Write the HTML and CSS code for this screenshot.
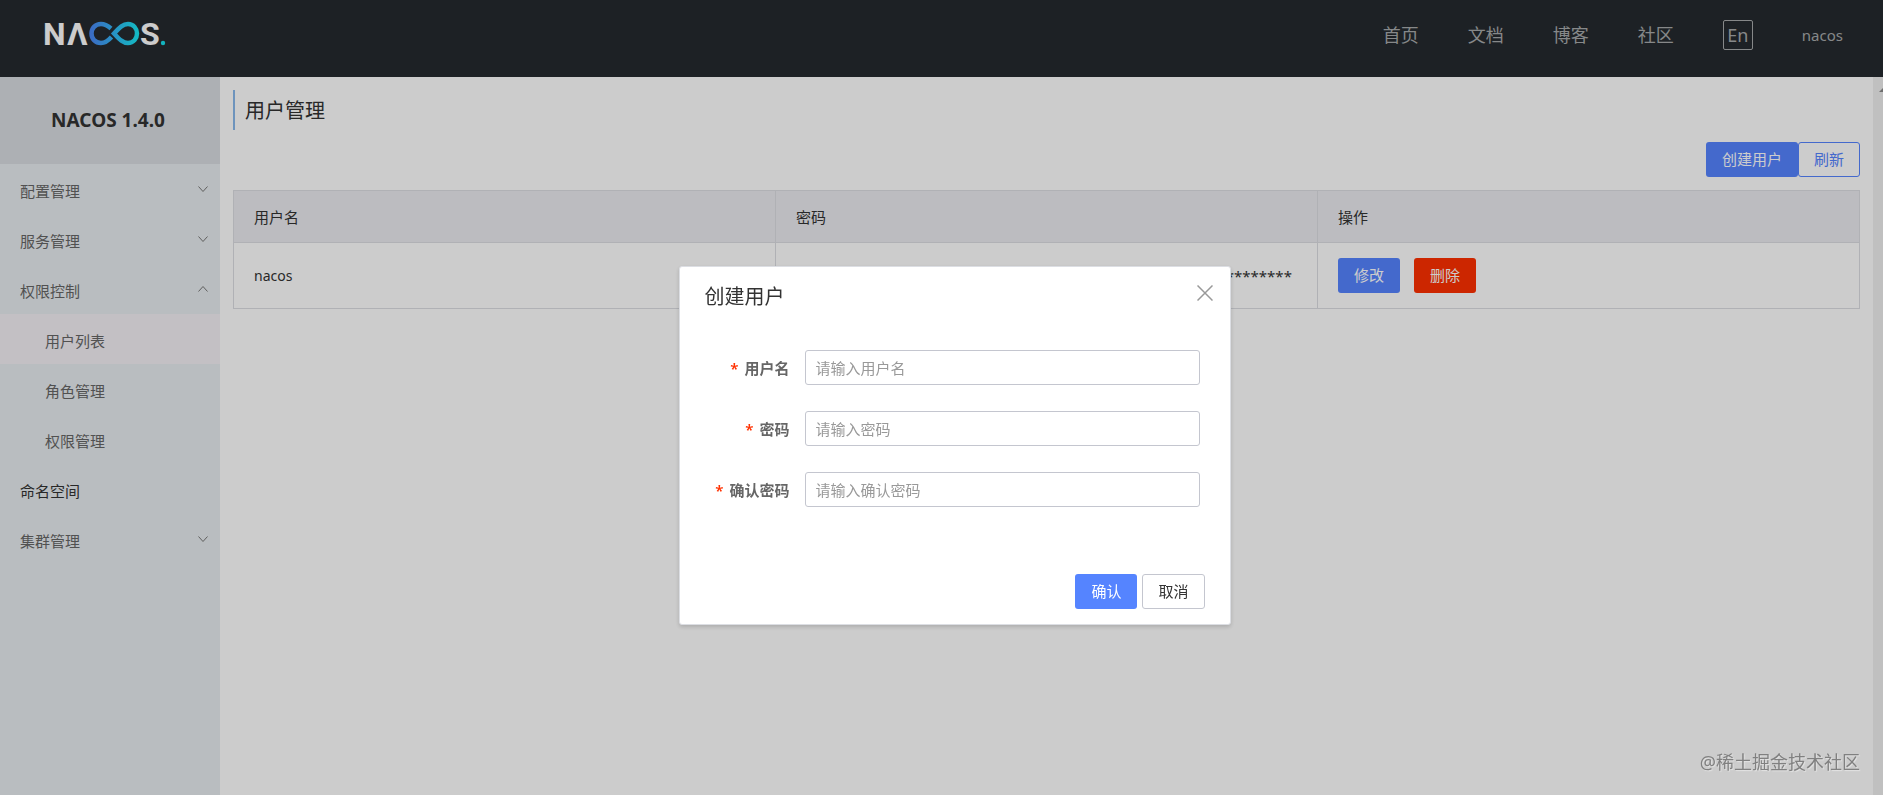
FILE: index.html
```html
<!DOCTYPE html>
<html lang="zh-CN">
<head>
<meta charset="utf-8">
<title>Nacos</title>
<link rel="stylesheet" href="styles.css">
</head>
<body>
<div class="app">
  <header class="header">
    <a class="logo" href="#" aria-label="Nacos">
      <svg width="124" height="40" viewBox="0 -8 124 40">
        <defs>
          <linearGradient id="loop" gradientUnits="userSpaceOnUse" x1="46" y1="0" x2="94" y2="0">
            <stop offset="0" stop-color="#4a88f6"/>
            <stop offset="1" stop-color="#18eaf4"/>
          </linearGradient>
        </defs>
        <g class="logo-text">
          <text x="-2" y="27">N</text>
          <text x="22" y="27">Λ</text>
          <text x="95" y="27">S</text>
        </g>
        <g fill="none" stroke="url(#loop)" stroke-width="4.500">
          <path d="M66 10.500C62.500 7.500 60 6 56 6C50 6 46.500 10.500 46.500 15.500S50 25 56 25C60 25 62.500 23.500 66.500 19"/>
          <path d="M69 15.500C75 9 78 6 83 6C88.500 6 92 10.500 92 15.500S88.500 25 83 25C78 25 75 22 69 15.500Z"/>
        </g>
        <circle cx="118" cy="25" r="2.200" fill="#18e0ee"/>
      </svg>
    </a>
    <nav class="nav">
      <a href="#">首页</a>
      <a href="#">文档</a>
      <a href="#">博客</a>
      <a href="#">社区</a>
      <button class="lang" type="button">En</button>
      <a class="account" href="#">nacos</a>
    </nav>
  </header>
  <div class="body">
    <aside class="sidebar">
      <h1 class="version">NACOS 1.4.0</h1>
      <ul class="menu">
        <li><a href="#">配置管理<svg class="chevron" viewBox="0 0 10 6"><path d="M0.500 0.500L5 5.500L9.500 0.500"/></svg></a></li>
        <li><a href="#">服务管理<svg class="chevron" viewBox="0 0 10 6"><path d="M0.500 0.500L5 5.500L9.500 0.500"/></svg></a></li>
        <li><a href="#">权限控制<svg class="chevron" viewBox="0 0 10 6"><path d="M0.500 5.500L5 0.500L9.500 5.500"/></svg></a></li>
        <li><a class="sub active" href="#">用户列表</a></li>
        <li><a class="sub" href="#">角色管理</a></li>
        <li><a class="sub" href="#">权限管理</a></li>
        <li><a class="leaf" href="#">命名空间</a></li>
        <li><a href="#">集群管理<svg class="chevron" viewBox="0 0 10 6"><path d="M0.500 0.500L5 5.500L9.500 0.500"/></svg></a></li>
      </ul>
    </aside>
    <main class="main">
      <h2 class="page-title">用户管理</h2>
      <div class="toolbar">
        <button class="btn primary" type="button">创建用户</button>
        <button class="btn ghost" type="button">刷新</button>
      </div>
      <table class="table">
        <thead>
          <tr><th>用户名</th><th>密码</th><th>操作</th></tr>
        </thead>
        <tbody>
          <tr>
            <td class="name">nacos</td>
            <td>************************************************************</td>
            <td>
              <div class="actions">
                <button class="btn primary" type="button">修改</button>
                <button class="btn danger" type="button">删除</button>
              </div>
            </td>
          </tr>
        </tbody>
      </table>
    </main>
    <div class="scrollbar"><svg width="10" height="6" viewBox="0 0 10 6"><path d="M0 5L5 0L10 5Z" fill="#8a8a8a"/></svg></div>
  </div>
</div>
<div class="overlay">
  <form class="dialog" role="dialog" aria-labelledby="dialog-title">
    <div class="dialog-head">
      <h2 id="dialog-title">创建用户</h2>
      <button class="close" type="button" aria-label="关闭"><svg width="16" height="16" viewBox="0 0 16 16"><path d="M0.500 0.500L15.500 15.500M15.500 0.500L0.500 15.500"/></svg></button>
    </div>
    <div class="fields">
      <label for="username">用户名</label>
      <input id="username" type="text" placeholder="请输入用户名">
      <label for="password">密码</label>
      <input id="password" type="password" placeholder="请输入密码">
      <label for="confirm">确认密码</label>
      <input id="confirm" type="password" placeholder="请输入确认密码">
    </div>
    <div class="dialog-foot">
      <button class="btn primary" type="button">确认</button>
      <button class="btn normal" type="button">取消</button>
    </div>
  </form>
</div>
<div class="watermark">@稀土掘金技术社区</div>
</body>
</html>
```
FILE: styles.css
```css
* {
  box-sizing: border-box;
}

body {
  margin: 0;
  overflow: hidden;
  font: 15px/20px "Noto Sans", "Noto Sans CJK SC", sans-serif;
  color: #333;
}

h1, h2, ul {
  margin: 0;
  padding: 0;
  font-weight: 400;
}

a {
  color: inherit;
  text-decoration: none;
}

button, input {
  font: inherit;
}

.app {
  display: flex;
  flex-direction: column;
  height: 100vh;
}

/* Top bar */
.header {
  display: flex;
  flex: none;
  justify-content: space-between;
  height: 77px;
  padding: 0 40px 0 45px;
  background: #252a2f;
}

.logo {
  padding-top: 10px;
}

.logo svg {
  display: block;
  overflow: visible;
}

.logo-text {
  font: 700 32px Roboto, sans-serif;
  fill: #fff;
}

.nav {
  display: flex;
  align-items: center;
  gap: 49px;
  height: 70px;
  font-size: 18px;
  color: #a8aaac;
}

.lang {
  width: 30px;
  height: 30px;
  padding: 0;
  border: 1px solid #a8aaac;
  border-radius: 2px;
  background: none;
  color: inherit;
  line-height: 24px;
}

.account {
  font-size: 15px;
}

.body {
  display: flex;
  flex: 1;
  min-height: 0;
}

/* Sidebar */
.sidebar {
  flex: none;
  width: 220px;
  background: #e8edf0;
}

.version {
  height: 87px;
  padding-right: 4px;
  background: #d9dde2;
  font-size: 19px;
  font-weight: 700;
  line-height: 87px;
  text-align: center;
}

.menu {
  list-style: none;
}

.menu a {
  display: flex;
  align-items: center;
  justify-content: space-between;
  height: 50px;
  padding: 4px 12px 0 20px;
  color: #666;
}

.menu .sub {
  padding-left: 45px;
}

.menu .active {
  background: #f4f1f6;
}

.menu .leaf {
  color: #333;
}

.chevron {
  width: 10px;
  height: 6px;
  margin-bottom: 4px;
  overflow: visible;
  fill: none;
  stroke: #777;
}

/* Content */
.main {
  flex: 1;
  padding: 13px;
}

.page-title {
  padding: 2px 0 0 10px;
  border-left: 2px solid #89b8ec;
  font-size: 20px;
  line-height: 38px;
}

.toolbar {
  display: flex;
  justify-content: flex-end;
  padding: 12px 0 13px;
}

.btn {
  height: 35px;
  padding: 0 15px;
  border: 1px solid transparent;
  border-radius: 3px;
  line-height: 33px;
}

.primary {
  background: #5584ff;
  color: #fff;
}

.ghost {
  border-color: #5584ff;
  background: none;
  color: #5584ff;
}

.danger {
  background: #ff3000;
  color: #fff;
}

.normal {
  border-color: #c4c6cf;
  background: #fff;
  color: #333;
}

.table {
  width: 100%;
  border-collapse: collapse;
  table-layout: fixed;
}

.table th, .table td {
  padding: 0 20px;
  border: 1px solid #dcdee3;
  font-weight: 400;
  text-align: left;
}

.table th {
  height: 52px;
  background: #ebecf0;
}

.table td {
  height: 66px;
}

.table .name {
  font-size: 14px;
}

.actions {
  display: flex;
  gap: 14px;
}

.scrollbar {
  flex: none;
  width: 10px;
  padding: 10px 0 0 6px;
  overflow: hidden;
  background: #f1f1f1;
}

.scrollbar svg {
  display: block;
}

/* Dialog */
.overlay {
  position: fixed;
  inset: 0;
  display: flex;
  align-items: flex-start;
  justify-content: center;
  padding: 266px 0 0 26px;
  background: rgba(0, 0, 0, 0.2);
}

.dialog {
  width: 552px;
  border: 1px solid #dcdee3;
  border-radius: 3px;
  background: #fff;
  box-shadow: 0 2px 4px rgba(0, 0, 0, 0.16);
}

.dialog-head {
  display: flex;
  align-items: flex-start;
  justify-content: space-between;
  padding: 18px 17px 0 25px;
}

.dialog-head h2 {
  font-size: 20px;
  line-height: 24px;
}

.close {
  padding: 0;
  border: 0;
  background: none;
}

.close svg {
  display: block;
  fill: none;
  stroke: #999;
  stroke-width: 1.500;
}

.fields {
  display: grid;
  grid-template-columns: 85px 1fr;
  gap: 26px 15px;
  align-items: center;
  padding: 41px 30px 67px 25px;
}

.fields label {
  color: #666;
  font-weight: 600;
  text-align: right;
  white-space: nowrap;
}

.fields label::before {
  content: "*";
  margin-right: 6px;
  color: #ff3000;
}

.fields input {
  width: 100%;
  height: 35px;
  padding: 0 10px;
  border: 1px solid #c4c6cf;
  border-radius: 3px;
}

.fields input::placeholder {
  color: #999;
}

.dialog-foot {
  display: flex;
  justify-content: flex-end;
  gap: 5px;
  padding: 0 25px 15px;
}

.watermark {
  position: fixed;
  right: 23px;
  bottom: 20px;
  color: #808080;
  font-size: 18px;
  line-height: 26px;
  text-shadow: 1px 1px 1px #e4e4e4;
}
```
